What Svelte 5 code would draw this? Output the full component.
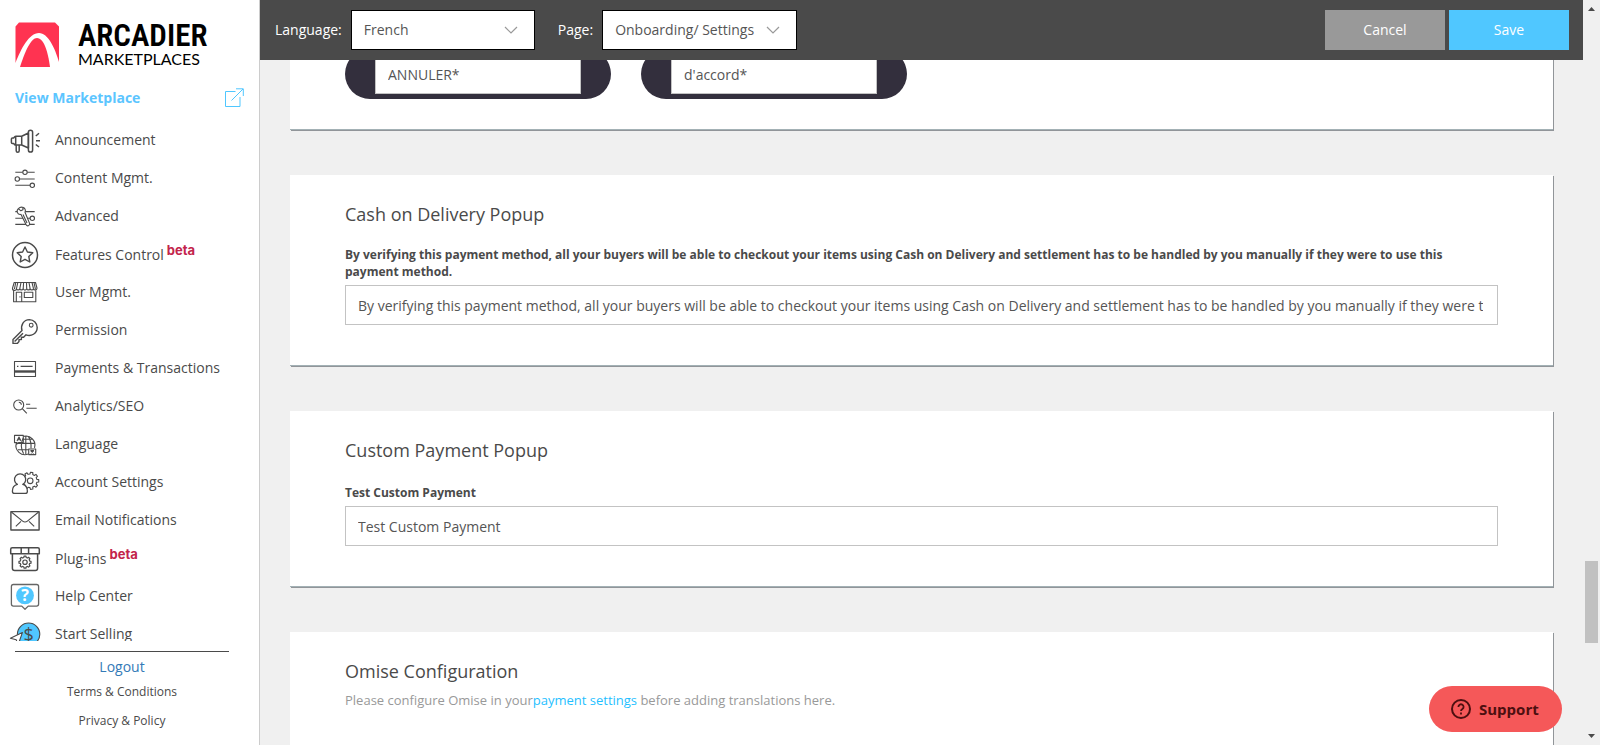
<script>
  const nav = [
    { icon: 'announcement', label: 'Announcement' },
    { icon: 'content', label: 'Content Mgmt.' },
    { icon: 'advanced', label: 'Advanced' },
    { icon: 'features', label: 'Features Control', beta: true },
    { icon: 'users', label: 'User Mgmt.' },
    { icon: 'permission', label: 'Permission' },
    { icon: 'payments', label: 'Payments & Transactions' },
    { icon: 'analytics', label: 'Analytics/SEO' },
    { icon: 'language', label: 'Language' },
    { icon: 'account', label: 'Account Settings' },
    { icon: 'email', label: 'Email Notifications' },
    { icon: 'plugins', label: 'Plug-ins', beta: true },
    { icon: 'help', label: 'Help Center' },
    { icon: 'selling', label: 'Start Selling' }
  ];

  const codText =
    'By verifying this payment method, all your buyers will be able to checkout your items using Cash on Delivery and settlement has to be handled by you manually if they were to use this payment method.';

  let language = $state('French');
  let section = $state('Onboarding/ Settings');
  let cancelText = $state('ANNULER*');
  let okText = $state("d'accord*");
  let cod = $state(codText);
  let custom = $state('Test Custom Payment');

  // Outline of a cog with the given number of teeth.
  function cog(cx, cy, outer, inner, teeth) {
    const step = (Math.PI * 2) / teeth;
    const pt = (r, a) => `${(cx + r * Math.cos(a)).toFixed(2)} ${(cy + r * Math.sin(a)).toFixed(2)}`;
    const points = [];
    for (let i = 0; i < teeth; i++) {
      const a = i * step;
      points.push(pt(inner, a - step * 0.3), pt(outer, a - step * 0.2), pt(outer, a + step * 0.2), pt(inner, a + step * 0.3));
    }
    return 'M' + points.join('L') + 'Z';
  }
</script>

{#snippet chevron()}
  <svg class="chevron" width="14" height="8" viewBox="0 0 14 8" aria-hidden="true">
    <path d="M1 1 L7 7 L13 1" fill="none" stroke="#999" stroke-width="1.2" />
  </svg>
{/snippet}

{#snippet navIcon(name)}
  <svg class="icon" width="30" height="30" viewBox="0 0 30 30" aria-hidden="true">
    {#if name === 'announcement'}
      <g stroke-width="1.5">
        <path d="M5.7 11.5H5L3.6 13H2.4a1 1 0 0 0-1 1v3.4a1 1 0 0 0 1 1h1.2L5 20h.7M5.7 11.2h6v8.8h-6zM11.7 11.2 18.4 8v15l-6.7-3M6.2 20v5.8a1.5 1.5 0 0 0 3 0V20" />
        <rect x="18.4" y="5.2" width="4.2" height="21.8" rx="2.1" />
        <path d="M25.8 11 29 8.3M26 15.7h4M25.8 19.5 29 22" />
      </g>
    {:else if name === 'content'}
      <path d="M5.3 9.3h7.4M17.3 9.3h7.4M9.6 16h15.1M5.3 22.3H20" />
      <circle cx="15" cy="9.3" r="2.2" /><circle cx="7.3" cy="16" r="2.2" /><circle cx="22.3" cy="22.3" r="2.2" />
    {:else if name === 'advanced'}
      <path d="M5.3 10.6h19.4M5.3 17.3h14.8M5.3 23.4h19.4" />
      <circle cx="22.3" cy="17.3" r="2.2" />
      <path d="M8.4 7.6 10.8 9.8 13 8.8 12.8 6.4C15 7 16 9.2 15 11.2L19.6 22.4C20 24.8 17.2 25.8 16 23.6L11 13.4C8.6 13.8 6.8 12 7.2 9.4Z" fill="#fff" />
      <path d="M8.4 7.6Q10.4 5.6 12.8 6.4M13 13.4 17 22" />
    {:else if name === 'features'}
      <circle cx="15" cy="16" r="12.5" stroke-width="1.5" />
      <path d="M15 8 17.4 13 22.8 13.7 18.8 17.5 19.8 23 15 20.3 10.2 23 11.2 17.5 7.2 13.7 12.6 13Z" stroke-width="1.4" />
    {:else if name === 'users'}
      <path d="M4.2 5.5h21.3L27 11.2a1.8 1.8 0 0 1-3.5.5 1.8 1.8 0 0 1-3.4 0 1.8 1.8 0 0 1-3.4 0 1.8 1.8 0 0 1-3.5 0 1.8 1.8 0 0 1-3.4 0 1.8 1.8 0 0 1-3.4 0 1.8 1.8 0 0 1-3.9-.5Z" />
      <path d="M7.8 5.5 6.4 12M11 5.5l-1.2 6.2M13.6 5.5l-.4 6.2M16.5 5.5l.2 6.2M19 5.5l1.1 6.2M22 5.5l1.5 6.2M5.8 5.5 4.4 12M24 5.5l1.4 6.5" />
      <path d="M3.6 13.3v11.4h22.2V13.3M6.3 24.5V15.3h5.4v9.2M14.3 15.3h8.5v5.2h-8.5zM10 19.2v1.4" />
    {:else if name === 'permission'}
      <path d="M12 15.6C10.4 10.6 13.6 4.6 19.4 4.6A8 8 0 0 1 27.2 12.6C27.2 18.6 21 22 16 19.8L13.6 22.2H11.4V24.6H9V26.6L7.3 28.4H3V24.6ZM4.6 26.6 13 18.2" stroke-width="1.4" />
      <circle cx="21.2" cy="10.2" r="1.9" />
    {:else if name === 'payments'}
      <rect x="4.5" y="8.5" width="21" height="15" />
      <path d="M4 18.5h22" stroke-width="2.4" /><path d="M7 13.4h1.4M10.6 13.4h12" />
    {:else if name === 'analytics'}
      <circle cx="8.7" cy="14" r="5" /><path d="M12.3 17.7 16.8 22.3M16 13.2h4.2M16.4 17.2h10.3M8.8 11.2a2.8 2.8 0 0 1 2.6 2.5" />
    {:else if name === 'language'}
      <path d="M13.5 7.4a9 9 0 0 1 11 11.4M6.4 14a9 9 0 0 0 12 11M15.8 7v18M8 20.8h10.5M6.4 14.4h18.4M13.5 10.2h9M13.2 9q-4 8.4.4 15.6M18.4 7.4q3.2 5.4 2.6 12" />
      <path d="M4.5 6.4h8.8v7.2H8.6L6.8 15.2v-1.6H4.5ZM18.7 20h7v5.6h-7zM7 12l2-4 2 4M7.7 10.8h2.6M20.4 21.6h3.6M22.2 21v.8M20.8 24.4l2.8-2.6M21 22l2.6 2.4" />
    {:else if name === 'account'}
      <path d={cog(20.2, 13.8, 8.6, 6.8, 9)} /><circle cx="20.2" cy="13.8" r="2.8" />
      <path d="M2.4 24.2C2.4 20 4.6 18 7.4 17.4a5.6 5.6 0 1 1 5.4 0c2.8.8 4.6 3 4.6 6.8 0 1.4-.8 2.2-2.2 2.2H4.6c-1.4 0-2.2-.8-2.2-2.2Z" fill="#fff" stroke-width="1.3" />
    {:else if name === 'email'}
      <g stroke-width="1.4"><rect x=".9" y="6.6" width="28.2" height="18.4" /><path d="M1.4 7 12.6 16.1Q15 18 17.4 16.1L28.6 7M5.8 21.4 11 16.4M24.2 21.4 19 16.4" stroke-width="1.1" /></g>
    {:else if name === 'plugins'}
      <g stroke-width="1.5"><path d="M2.2 4.8h25.6q1.5 0 1.5 1.5v4.4H.7V6.3q0-1.5 1.5-1.5ZM11.2 4.8v5.9M18.6 4.8v5.9M2.4 10.7v14.5q0 2.3 2.3 2.3h20.6q2.3 0 2.3-2.3V10.7" /></g>
      <path d={cog(15, 19.2, 6.1, 4.9, 8)} stroke-width="1.2" /><circle cx="15" cy="19.2" r="2.2" stroke-width="1.2" />
    {:else if name === 'help'}
      <path d="M3.4 3.5h23.2q2 0 2 2v17.6q0 2-2 2h-8.4L15 28.3 11.8 25.1H3.4q-2 0-2-2V5.5q0-2 2-2Z" stroke="#666" stroke-width="1.3" />
      <circle cx="15" cy="14.4" r="8.9" fill="#50c7ff" stroke="none" />
      <text x="15" y="20" fill="#fff" font-size="16" font-weight="700">?</text>
    {:else if name === 'selling'}
      <circle cx="18.6" cy="15.2" r="11.2" fill="#50c7ff" />
      <text x="18.6" y="21.5" fill="#4a4a4a" font-size="18">$</text>
      <path d="M.4 19.2 12.4 13.6 8 26 6.2 20.8Z" fill="#fff" />
    {/if}
  </svg>
{/snippet}

<div class="page">
  <aside class="sidebar">
    <div class="brand">
      <svg width="45" height="46" viewBox="0 0 45 46" aria-hidden="true">
        <path d="M4 0.5H40L44 4.5V40C40 26 33 11 24 11 14 11 6 27 .5 41V4.5Z" fill="#ff3351" />
        <path d="M5 45C10 29 16 16 22 16 29 16 33 30 35 45Z" fill="#ff3351" />
      </svg>
      <div class="wordmark">
        <span class="name">ARCADIER</span>
        <span class="tagline">MARKETPLACES</span>
      </div>
    </div>

    <a class="view" href="#marketplace">
      View Marketplace
      <svg width="19" height="19" viewBox="0 0 19 19" fill="none" stroke="#50c7ff" aria-hidden="true">
        <path d="M10.5 3.5h-10v15h14.5V9M6.5 12.5 18 1M11 .8h7.3V8" />
      </svg>
    </a>

    <nav>
      {#each nav as item}
        <a href="#{item.icon}">
          {@render navIcon(item.icon)}
          <span>{item.label}{#if item.beta}<sup>beta</sup>{/if}</span>
        </a>
      {/each}
    </nav>

    <footer>
      <a class="logout" href="#logout">Logout</a>
      <a href="#terms">Terms &amp; Conditions</a>
      <a href="#privacy">Privacy &amp; Policy</a>
    </footer>
  </aside>

  <div class="workspace">
    <header>
      <label for="language">Language:</label>
      <div class="select language">
        <select id="language" bind:value={language}><option>French</option></select>
        {@render chevron()}
      </div>
      <label class="second" for="section">Page:</label>
      <div class="select section">
        <select id="section" bind:value={section}><option>Onboarding/ Settings</option></select>
        {@render chevron()}
      </div>
      <div class="actions">
        <button type="button">Cancel</button>
        <button type="button" class="save">Save</button>
      </div>
    </header>

    <main>
      <div class="cards">
        <section class="card buttons">
          <div class="pill"><input aria-label="Cancel button" bind:value={cancelText} /></div>
          <div class="pill"><input aria-label="OK button" bind:value={okText} /></div>
        </section>

        <section class="card">
          <h2>Cash on Delivery Popup</h2>
          <label for="cod">{codText}</label>
          <input id="cod" bind:value={cod} />
        </section>

        <section class="card">
          <h2>Custom Payment Popup</h2>
          <label for="custom">Test Custom Payment</label>
          <input id="custom" bind:value={custom} />
        </section>

        <section class="card last">
          <h2>Omise Configuration</h2>
          <p>Please configure Omise in your<a href="#payments">payment settings</a> before adding translations here.</p>
        </section>
      </div>
    </main>
  </div>

  <div class="scrollbar" aria-hidden="true">
    <svg width="7" height="4" viewBox="0 0 7 4"><path d="M0 4 3.5 0 7 4Z" fill="#4a4a4a" /></svg>
    <div class="track"><div class="thumb"></div></div>
    <svg width="7" height="4" viewBox="0 0 7 4"><path d="M0 0 3.5 4 7 0Z" fill="#4a4a4a" /></svg>
  </div>

  <button type="button" class="support">
    <svg width="20" height="20" viewBox="0 0 20 20" fill="none" stroke="#4d0f10" stroke-width="2" aria-hidden="true">
      <circle cx="10" cy="10" r="9" />
      <path d="M7.4 8a2.6 2.6 0 1 1 4 2.1q-1.4.9-1.4 2M10 13.6v1.8" stroke-width="1.8" />
    </svg>
    Support
  </button>
</div>

<style>
  :global(body) {
    margin: 0;
  }
  .page,
  .page * {
    box-sizing: border-box;
  }
  .page {
    display: grid;
    grid-template-columns: 260px minmax(0, 1fr) 17px;
    height: 100vh;
    overflow: hidden;
    background: #f0f0f0;
    color: #4a4a4a;
    font: 14px/20px 'Open Sans', sans-serif;
  }
  a {
    color: inherit;
    text-decoration: none;
  }
  input,
  select,
  button {
    font: inherit;
    color: #555;
    border-radius: 0;
  }

  .sidebar {
    display: flex;
    flex-direction: column;
    min-height: 0;
    background: #fff;
    border-right: 1px solid #ccc;
  }
  .brand {
    display: flex;
    gap: 18px;
    padding: 22px 15px 0;
  }
  .wordmark {
    display: flex;
    flex-direction: column;
    color: #000;
  }
  .name {
    font: 600 31px/28px 'Roboto Condensed', 'Liberation Sans Narrow', 'Open Sans Condensed', 'Roboto', sans-serif;
  }
  .tagline {
    font: 400 16px/18px 'Lato', sans-serif;
  }
  .view {
    display: flex;
    justify-content: space-between;
    height: 20px;
    margin: 20px 15px 13px;
    color: #5bc5ff;
    font-weight: 700;
  }
  nav {
    flex: 1;
    min-height: 0;
    overflow: hidden;
  }
  nav a {
    display: flex;
    align-items: center;
    gap: 15px;
    height: 38px;
    padding-left: 10px;
    white-space: nowrap;
  }
  .icon {
    flex: none;
    fill: none;
    stroke: #4a4a4a;
    stroke-width: 1.1;
    stroke-linejoin: round;
    overflow: visible;
  }
  .icon text {
    stroke: none;
    text-anchor: middle;
  }
  sup {
    margin-left: 3px;
    color: #c3244c;
    font: 700 13px/12px 'Inter', sans-serif;
    vertical-align: 5px;
  }
  footer {
    display: flex;
    flex-direction: column;
    align-items: center;
    margin: 10px 30px 0 15px;
    padding: 5px 0 14px;
    border-top: 1px solid #4a4a4a;
    font-size: 12px;
  }
  footer a {
    margin-bottom: 9px;
  }
  footer a:last-child {
    margin-bottom: 0;
  }
  footer .logout {
    margin-bottom: 5px;
    color: #337ab7;
    font-size: 14px;
  }

  .workspace {
    display: flex;
    flex-direction: column;
    min-height: 0;
  }
  header {
    display: flex;
    flex: none;
    align-items: center;
    height: 60px;
    padding: 0 14px 0 15px;
    background: #4a4a4a;
    color: #fff;
  }
  header .second {
    margin-left: 23px;
  }
  .select {
    display: grid;
    align-items: center;
    margin-left: 9px;
  }
  .select > :global(*) {
    grid-area: 1 / 1;
  }
  .language {
    width: 184px;
  }
  .section {
    width: 195px;
  }
  select {
    appearance: none;
    width: 100%;
    height: 40px;
    padding: 0 12px;
    border: 1px solid #000;
    background: #fff;
  }
  .chevron {
    justify-self: end;
    margin-right: 17px;
    pointer-events: none;
  }
  .actions {
    display: flex;
    gap: 4px;
    margin-left: auto;
  }
  .actions button {
    width: 120px;
    height: 40px;
    border: 0;
    background: #999;
    color: #fff;
  }
  .actions .save {
    background: #50c7ff;
  }

  main {
    flex: 1;
    min-height: 0;
    overflow: hidden;
    padding: 0 30px;
  }
  .cards {
    display: flex;
    flex-direction: column;
    gap: 45px;
    margin-top: -40px;
  }
  .card {
    padding: 27px 55px 40px;
    background: #fff;
    border-bottom: 1px solid #a3b1b5;
    box-shadow: 1px 1px 0 #919599;
  }
  .card.buttons {
    display: flex;
    gap: 30px;
    padding: 29px 55px 30px;
  }
  .card.last {
    min-height: 200px;
  }
  .pill {
    padding: 5px 30px;
    border-radius: 25px;
    background: #332f3d;
  }
  .pill input {
    width: 206px;
  }
  h2 {
    margin: 0 0 19px;
    font: 400 18px/25px 'Open Sans', sans-serif;
  }
  .card label {
    display: flex;
    align-items: flex-end;
    min-height: 19px;
    margin-bottom: 5px;
    font-size: 12px;
    font-weight: 700;
    line-height: 17px;
  }
  .card input {
    display: block;
    height: 40px;
    padding: 0 14px 0 12px;
    border: 1px solid #c3c3c3;
    background: #fff;
  }
  .card > input {
    width: 100%;
  }
  .last h2 {
    margin-bottom: 6px;
  }
  p {
    margin: 0;
    color: #999;
    font-size: 13px;
  }
  p a {
    color: #1fbfff;
  }

  .scrollbar {
    display: flex;
    flex-direction: column;
    align-items: center;
    padding: 7px 0;
  }
  .track {
    display: flex;
    flex: 1;
    flex-direction: column;
    justify-content: flex-end;
    padding-bottom: 91px;
  }
  .thumb {
    width: 13px;
    height: 82px;
    background: #c1c1c1;
  }
  .support {
    position: fixed;
    right: 38px;
    bottom: 13px;
    display: flex;
    align-items: center;
    gap: 8px;
    width: 133px;
    height: 46px;
    padding: 0 0 0 22px;
    border: 0;
    border-radius: 23px;
    background: #f55859;
    color: #4d0f10;
    font-size: 15px;
    font-weight: 700;
  }
</style>
